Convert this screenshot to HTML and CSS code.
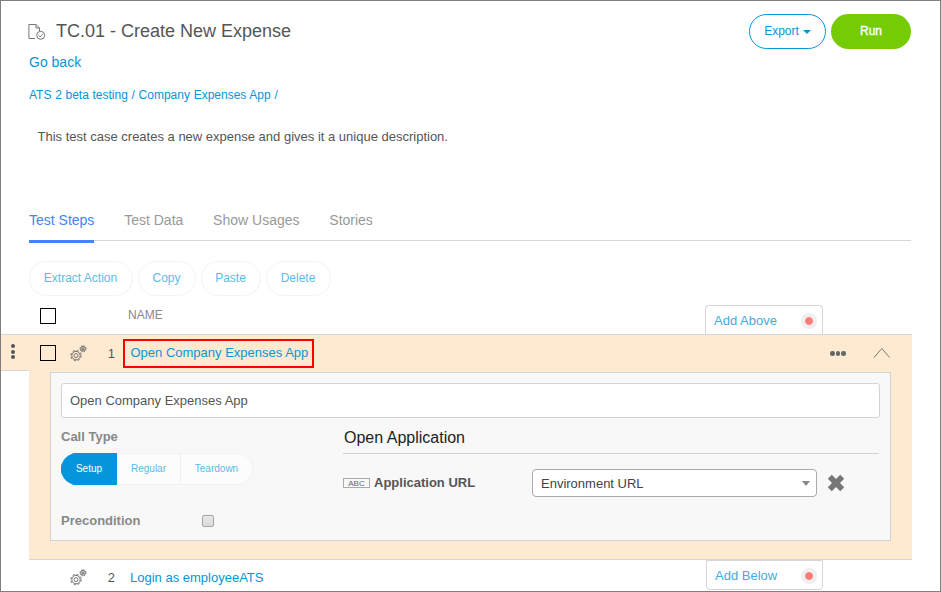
FILE: index.html
```html
<!DOCTYPE html>
<html lang="en">
<head>
<meta charset="utf-8">
<title>TC.01 - Create New Expense</title>
<link rel="stylesheet" href="styles.css">
</head>
<body>
<svg class="defs" width="0" height="0">
  <symbol id="gears" viewBox="0 0 17 17">
    <g fill="none" stroke="#666">
      <circle cx="6" cy="10.600" r="4.200" stroke-width=".9"/>
      <circle cx="6" cy="10.600" r="5.200" stroke-width="1" stroke-dasharray="2.100 1.984"/>
      <circle cx="6" cy="10.600" r="2" stroke-width=".9"/>
      <circle cx="13" cy="3.800" r="2.300" stroke-width="1"/>
      <circle cx="13" cy="3.800" r="3.100" stroke-width=".9" stroke-dasharray="1.300 1.135"/>
      <circle cx="13" cy="3.800" r=".9" stroke-width="1"/>
    </g>
  </symbol>
</svg>
<div class="window">
  <header class="header">
    <svg class="doc-icon" width="18" height="18" viewBox="0 0 18 18" fill="none" stroke="#777" stroke-width="1">
      <path d="M7 15.500H.9V1.500H8L11.500 5V8"/>
      <path d="M8 1.500V5H11.500"/>
      <circle cx="12.700" cy="12.300" r="4"/>
      <path d="M10.700 12.300L12.200 13.900L14.900 10.800"/>
    </svg>
    <h1 class="title">TC.01 - Create New Expense</h1>
    <button class="btn export">Export<span class="caret"></span></button>
    <button class="btn run">Run</button>
  </header>
  <a class="back">Go back</a>
  <nav class="crumbs"><a>ATS 2 beta testing</a> / <a>Company Expenses App</a> /</nav>
  <p class="description">This test case creates a new expense and gives it a unique description.</p>
  <nav class="tabs">
    <a class="tab active">Test Steps</a><a class="tab">Test Data</a><a class="tab">Show Usages</a><a class="tab">Stories</a>
  </nav>
  <div class="actions">
    <button class="btn ghost extract">Extract Action</button>
    <button class="btn ghost copy">Copy</button>
    <button class="btn ghost paste">Paste</button>
    <button class="btn ghost delete">Delete</button>
  </div>
  <div class="table-head">
    <span class="check"></span>
    <span class="name-col">NAME</span>
    <a class="add above">Add Above<span class="dot"></span></a>
  </div>
  <section class="step-open">
    <div class="handle"><i></i><i></i><i></i></div>
    <div class="step-main">
      <div class="step-row">
        <span class="check"></span>
        <svg class="gears" width="17" height="17"><use href="#gears"/></svg>
        <span class="num">1</span>
        <a class="step-name marked">Open Company Expenses App</a>
        <span class="more"><i></i><i></i><i></i></span>
        <svg class="collapse" width="18" height="12" viewBox="0 0 18 12" fill="none" stroke="#777" stroke-width="1"><path d="M1 10.500L8.800 1.500L16.600 10.500"/></svg>
      </div>
      <div class="panel">
        <div class="input">Open Company Expenses App</div>
        <div class="panel-body">
          <div class="call">
            <div class="label">Call Type</div>
            <div class="segments"><span class="seg on">Setup</span><span class="seg regular">Regular</span><span class="seg teardown">Teardown</span></div>
            <div class="precondition"><span class="label">Precondition</span><span class="native-check"></span></div>
          </div>
          <div class="app">
            <h2 class="app-title">Open Application</h2>
            <div class="param">
              <span class="abc">ABC</span>
              <span class="param-name">Application URL</span>
              <div class="select">Environment URL<span class="arrow"></span></div>
              <svg class="remove" width="18" height="18" viewBox="0 0 18 18"><path d="M4.800 .8L9 5L13.200 .8L17.200 4.800L13 9L17.200 13.200L13.200 17.200L9 13L4.800 17.200L.8 13.200L5 9L.8 4.800Z" fill="#777"/></svg>
            </div>
          </div>
        </div>
      </div>
    </div>
  </section>
  <div class="step-next">
    <svg class="gears" width="17" height="17"><use href="#gears"/></svg>
    <span class="num">2</span>
    <a class="step-name">Login as employeeATS</a>
    <a class="add below">Add Below<span class="dot"></span></a>
  </div>
</div>
</body>
</html>
```
FILE: styles.css
```css
* { box-sizing: border-box; }
body { margin: 0; background: #fff; font-family: "Liberation Sans", Arial, sans-serif; font-size: 13px; color: #555; }
a { color: #0595db; text-decoration: none; }
button { font-family: inherit; padding: 0; }
.defs { display: block; height: 0; }
.window { width: 941px; height: 592px; border: 1px solid #7f7f7f; overflow: hidden; display: flex; flex-direction: column; }
.window > * { flex-shrink: 0; }

.header { display: flex; align-items: center; height: 35px; margin: 13px 29px 0 27px; }
.title { margin: 0 auto 0 10px; padding-bottom: 1px; font-size: 18px; font-weight: 400; line-height: 22px; }
.btn { height: 35px; border-radius: 18px; font-size: 12px; }
.export { width: 77px; padding-bottom: 2px; border: 1px solid #0595db; background: #fff; color: #0595db; display: flex; align-items: center; justify-content: center; }
.caret { margin: 2px 0 0 4px; border: 4px solid transparent; border-top-color: #0595db; border-bottom: 0; }
.run { width: 80px; margin-left: 5px; padding-bottom: 2px; border: 0; background: #76cc04; color: #fff; -webkit-text-stroke: .35px #fff; }

.back { margin: 5px 0 0 28px; font-size: 14px; line-height: 17px; }
.crumbs { margin: 16px 0 0 28px; font-size: 12px; line-height: 16px; color: #0595db; word-spacing: .35px; }
.description { margin: 25px 0 0 36.500px; line-height: 18px; }

.tabs { display: flex; height: 34px; margin: 63px 29px 0 28px; background: linear-gradient(#d6d6d6, #d6d6d6) 0 31px / 100% 1px no-repeat; gap: 29.800px; font-size: 14px; }
.tab { color: #999; line-height: 22px; }
.tab.active { color: #4285f4; border-bottom: 3px solid #4285f4; }

.actions { display: flex; gap: 5px; margin: 18px 0 0 28px; }
.ghost { padding: 0 1px 2px 0; border: 1px solid #f4f4f4; background: #fff; color: #5fb9e6; }
.extract { width: 104px; }
.copy { width: 58px; }
.paste { width: 60px; }
.delete { width: 65px; }

.table-head { display: flex; align-items: flex-start; height: 38px; margin-left: 39px; }
.check { width: 16px; height: 16px; border: 1px solid #000; flex: none; }
.table-head .check { margin-top: 12px; background: #fff; }
.name-col { width: 577px; margin: 12px 0 0 72px; font-size: 12px; line-height: 14px; color: #888; }
.add { display: flex; justify-content: space-between; border: 1px solid #d6d6d6; background: #fff; color: #42abe0; line-height: 29px; }
.above { width: 118px; height: 29px; margin-top: 9px; padding: 0 5px 0 8px; border-bottom: 0; border-radius: 4px 4px 0 0; }
.dot { width: 16px; height: 16px; margin-top: 7px; border: 4px solid #efefef; border-radius: 50%; background: #ff7b7b; background-clip: padding-box; }

.step-open { display: grid; grid-template-columns: 28px 883px; align-items: start; width: 911px; height: 226px; border-top: 1px solid #d6d6d6; }
.handle { display: flex; flex-direction: column; align-items: center; height: 36px; padding: 9px 4px 0 0; gap: 1.500px; background: #feead1; border-bottom: 1px solid #d6d6d6; }
.handle i { width: 4px; height: 4px; border-radius: 50%; background: #555; }
.step-main { height: 225px; background: #feead1; border-bottom: 1px solid #d6d6d6; }
.step-row { display: flex; align-items: center; height: 37px; padding-left: 11px; }
.step-row .check { margin-top: -2px; }
.gears { margin-left: 14px; flex: none; }
.num { width: 12px; margin-left: 16px; text-align: right; }
.step-name { margin-left: 15px; }
.marked { margin-left: 8px; width: 191px; height: 29px; border: 2px solid #f00; line-height: 24px; padding-left: 5.500px; }
.more { display: flex; gap: 1px; margin-left: 516px; }
.more i { width: 4.500px; height: 4.500px; border-radius: 50%; background: #666; }
.collapse { margin-left: 27px; margin-top: -2px; }

.panel { width: 841px; height: 169px; margin-left: 21px; padding: 10px; border: 1px solid #d1d3d4; background: #f8f8f8; }
.input { height: 35px; border: 1px solid #d1d3d4; border-radius: 3px; background: #fff; line-height: 33px; padding-left: 8px; }
.panel-body { display: flex; }
.call { width: 282px; }
.label { font-weight: 700; line-height: 15px; color: #888; }
.call > .label { margin-top: 11px; }
.segments { display: flex; width: 192px; height: 32px; margin-top: 9px; border-radius: 16px; overflow: hidden; background: #fcfcfc; font-size: 10px; line-height: 30px; text-align: center; }
.seg { color: #5fb9e6; border: 1px solid #f1f1f1; }
.seg.on { width: 56px; background: #0595db; border-color: #0595db; color: #fff; }
.regular { width: 64px; border-left: 0; }
.teardown { width: 72px; border-left: 0; border-radius: 0 16px 16px 0; }
.precondition { display: flex; align-items: center; justify-content: space-between; width: 153px; margin-top: 28px; }
.native-check { width: 12px; height: 12px; border: 1px solid #a5a5a5; border-radius: 2px; background: linear-gradient(#e8e8e8, #dcdcdc); }
.app { width: 536px; }
.app-title { height: 36px; margin: 0; padding: 10px 0 0 1px; border-bottom: 1px solid #d1d3d4; font-size: 16px; font-weight: 400; line-height: 19px; color: #222; }
.param { display: flex; align-items: center; height: 28px; margin-top: 15px; }
.abc { width: 27px; height: 10px; margin-top: -1px; border: 1px solid #aaa; font-size: 8px; line-height: 9px; text-align: center; color: #666; }
.param-name { width: 158px; margin-left: 4px; padding-bottom: 2px; font-weight: 700; }
.select { display: flex; align-items: center; justify-content: space-between; width: 285px; height: 28px; padding: 0 6px 0 8px; border: 1px solid #aaa; border-radius: 4px; background: #fff; color: #444; }
.arrow { border: 4px solid transparent; border-top: 5px solid #888; border-bottom: 0; }
.remove { margin-left: 10px; }

.step-next { display: flex; align-items: center; height: 35px; margin-left: 28px; padding-left: 27px; }
.step-next .gears { margin-left: 14px; }
.step-next .step-name { width: 576px; }
.below { width: 117px; height: 30px; align-self: flex-start; border-radius: 0 0 4px 4px; padding: 0 5px 0 8px; }
```
